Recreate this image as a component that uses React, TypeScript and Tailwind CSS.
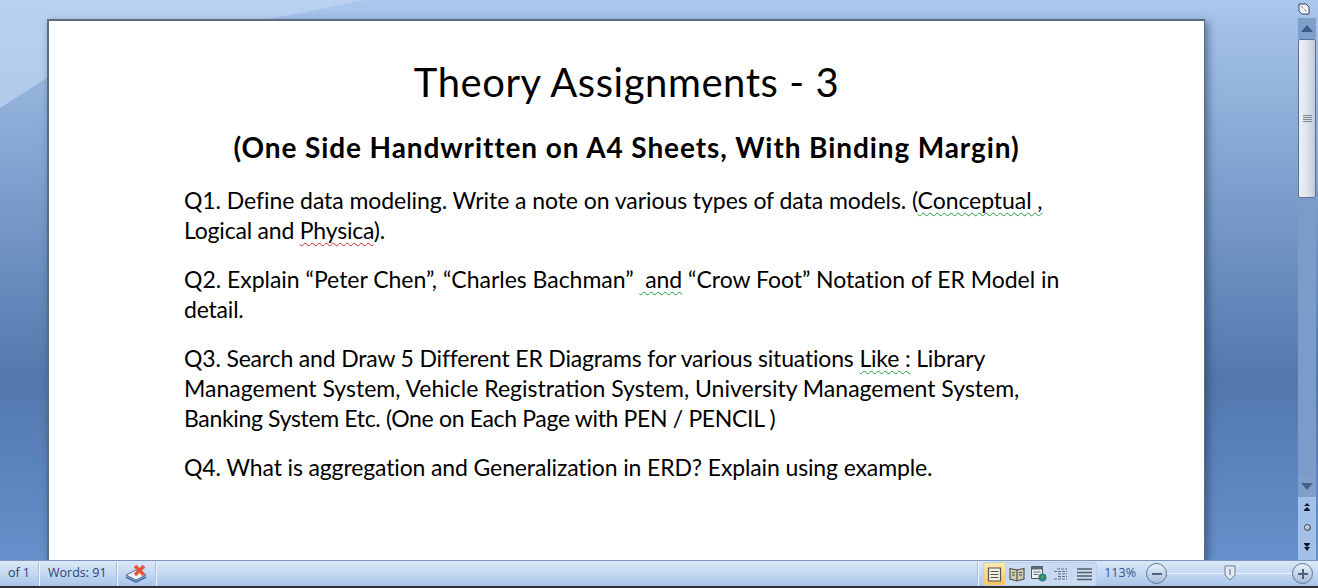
import React from "react";

const bodyFont = "font-['Lato','Carlito','Liberation_Sans',sans-serif]";

function Squiggle({ color, children }: { color: "red" | "green"; children: React.ReactNode }) {
  return (
    <span
      className={`underline decoration-wavy decoration-1 underline-offset-[3px] [text-decoration-skip-ink:none] ${
        color === "red" ? "decoration-[#cc2a2a]" : "decoration-[#259a45]"
      }`}
    >
      {children}
    </span>
  );
}

function Line({ children, className = "" }: { children: React.ReactNode; className?: string }) {
  return <div className={`h-[30px] whitespace-pre leading-[30px] ${className}`}>{children}</div>;
}

function Scrollbar() {
  return (
    <div className="flex h-full w-[18px] flex-col items-center bg-[#a3c0e8] pb-[3px]">
      <div className="flex h-[21px] w-[18px] items-center justify-center bg-[#7f9fcb]">
        <svg width="12" height="7" viewBox="0 0 12 7">
          <path d="M6 0 L12 7 L0 7 Z" fill="#3f5a86" />
        </svg>
      </div>
      <div className="flex h-[159px] w-[18px] items-center justify-center rounded-[2px] border border-[#5a7096] bg-gradient-to-r from-[#eef1f6] via-[#dfe4ec] to-[#c3cbd8]">
        <svg width="9" height="8" viewBox="0 0 9 8" stroke="#7f8794" strokeWidth="1">
          <path d="M0 .5H9M0 2.5H9M0 4.5H9M0 6.5H9" />
        </svg>
      </div>
      <div className="min-h-0 w-[18px] flex-1 bg-[#7d9bc8]" />
      <div className="flex h-[22px] w-[18px] items-center justify-center bg-[#7f9fcb]">
        <svg width="12" height="7" viewBox="0 0 12 7">
          <path d="M0 0 L12 0 L6 7 Z" fill="#4a628a" />
        </svg>
      </div>
      <div className="flex h-[20px] items-center justify-center">
        <svg width="8" height="8" viewBox="0 0 8 8" fill="#10182a">
          <path d="M4 0 L7 3 H1 Z M4 4 L7 7 H1 Z" />
          <path d="M1 7h6v1H1z" />
        </svg>
      </div>
      <div className="flex h-[20px] items-center justify-center">
        <div className="h-[7px] w-[7px] rounded-full border border-[#30405a] bg-gradient-to-br from-[#f2f4f8] to-[#8c96a8]" />
      </div>
      <div className="flex h-[20px] items-center justify-center">
        <svg width="8" height="8" viewBox="0 0 8 8" fill="#10182a">
          <path d="M1 0h6v1H1z" />
          <path d="M1 1 H7 L4 4 Z M1 4 H7 L4 8 Z" />
        </svg>
      </div>
    </div>
  );
}

function Divider() {
  return <div className="h-[24px] w-px shrink-0 bg-[#a9bfdb] shadow-[1px_0_0_#eef4fb]" />;
}

function ViewButton({ active, children }: { active?: boolean; children: React.ReactNode }) {
  return (
    <div
      className={`flex h-[23px] w-[22px] items-center justify-center border-r border-[#c3d5ec] ${
        active ? "bg-gradient-to-b from-[#fde9b0] to-[#f6c35c]" : ""
      }`}
    >
      {children}
    </div>
  );
}

function ZoomButton({ plus }: { plus?: boolean }) {
  return (
    <div className="flex h-[21px] w-[21px] shrink-0 items-center justify-center rounded-full border border-[#5c7396] bg-gradient-to-b from-[#e9f1fb] to-[#a6bcd9]">
      <svg width="12" height="12" viewBox="0 0 12 12" fill="#4c5f7c">
        <path d="M1 5h10v2H1z" />
        {plus && <path d="M5 1h2v10H5z" />}
      </svg>
    </div>
  );
}

function StatusBar() {
  return (
    <div className="relative z-10 flex h-[28px] shrink-0 flex-col">
      <div className="flex h-[26px] items-center border-t border-[#7b96bc] bg-gradient-to-b from-[#dbe8f8] via-[#c4d8f2] to-[#a8c5ea] font-['Open_Sans',sans-serif] text-[12.5px] text-[#2c4470]">
        <div className="flex w-[38px] shrink-0 justify-end pr-[8px] whitespace-nowrap">of 1</div>
        <Divider />
        <div className="w-[77px] shrink-0 pl-[9px] whitespace-nowrap">Words: 91</div>
        <Divider />
        <div className="flex w-[38px] shrink-0 justify-center">
          <svg width="24" height="20" viewBox="0 0 24 20">
            <path d="M2 11 L12 6 L22 11 L12 16 Z" fill="#eef2f8" stroke="#516a93" />
            <path d="M2 12 L12 17 L22 12 V14 L12 19 L2 14 Z" fill="#4a6ea8" />
            <path d="M11 2 L20 11 M20 2 L11 11" stroke="#e8553c" strokeWidth="3.5" />
          </svg>
        </div>
        <Divider />
        <div className="min-w-0 flex-1" />
        <Divider />
        <div className="ml-[5px] flex h-[24px] w-[114px] shrink-0 overflow-hidden rounded-[3px] border border-[#bcd0ea] bg-[#c9dbf3]">
          <ViewButton active>
            <svg width="15" height="15" viewBox="0 0 15 15" fill="#f4f1e6" stroke="#55534a" strokeWidth="1.2">
              <path d="M1.5 1h12v13h-12z" />
              <path d="M3.5 4.5h8M3.5 7.5h8M3.5 10.5h8" fill="none" />
            </svg>
          </ViewButton>
          <ViewButton>
            <svg width="16" height="15" viewBox="0 0 16 15" fill="#cfcab4" stroke="#55534a" strokeWidth="1.2">
              <path d="M1 1.5 L8 3 L15 1.5 V12 L8 14 L1 12 Z" />
              <path d="M8 3V14M3 5.5h3M3 8h3M10 5.5h3M10 8h3" />
            </svg>
          </ViewButton>
          <ViewButton>
            <svg width="16" height="16" viewBox="0 0 16 16">
              <path d="M.5.5h11v12H.5z" fill="#eef0f2" stroke="#4f5662" />
              <path d="M.5.5h11v3H.5z" fill="#5f6a7a" />
              <path d="M2.5 6h7M2.5 8.5h5" stroke="#5f6a7a" />
              <circle cx="11.5" cy="11.5" r="4" fill="#2e7f86" />
              <path d="M9.5 10.5l3-1.5 1 2-2 2.5z" fill="#4fa24f" />
            </svg>
          </ViewButton>
          <ViewButton>
            <svg width="15" height="13" viewBox="0 0 15 13" stroke="#626b78" strokeWidth="1.2">
              <path d="M4 1h10M1 3.5h13M5 6h9M5 8.5h9M1 11h13" strokeDasharray="3 1" />
            </svg>
          </ViewButton>
          <div className="flex h-[23px] min-w-0 flex-1 items-center justify-center">
            <svg width="15" height="13" viewBox="0 0 15 13" stroke="#555c66">
              <path d="M0 1h15M0 4.5h15M0 8h15M0 11.5h15" strokeWidth="1.6" />
            </svg>
          </div>
        </div>
        <div className="w-[39px] shrink-0 text-right text-[#2f5590]">113%</div>
        <div className="ml-[10px] flex w-[167px] shrink-0 items-center">
          <ZoomButton />
          <div className="relative h-px min-w-0 flex-1 bg-[#eaf1fa]">
            <svg className="absolute top-[-8px] left-[57px]" width="12" height="16" viewBox="0 0 12 16">
              <path d="M1 1h10v9l-5 5-5-5z" fill="#e3e9f1" stroke="#6a7d99" />
              <path d="M6 4v6" stroke="#9aa7ba" strokeWidth="2" />
            </svg>
          </div>
          <ZoomButton plus />
        </div>
        <div className="w-[5px] shrink-0" />
      </div>
      <div className="h-[2px] bg-[#2e2e2e]" />
    </div>
  );
}

export default function App() {
  return (
    <div className="flex h-[588px] w-[1318px] flex-col overflow-hidden bg-[#6b95cb]">
      <div className="relative flex min-h-0 flex-1 bg-gradient-to-b from-[#a9c6ec] via-[#5278ad] via-68% to-[#6690cc]">
        {/* lighter swoosh behind the page, top left */}
        <svg className="absolute top-0 left-0" width="420" height="112" viewBox="0 0 420 112">
          <path d="M0 0H365L270 19L47 78L0 108Z" fill="#c3d8f2" opacity="0.65" />
        </svg>
        <div className="relative flex min-w-0 flex-1 flex-col pt-[19px] pl-[47px] pr-[93px]">
          <div className={`h-[541px] shrink-0 border-t-2 border-l-2 border-r border-[#5b6b80] bg-white pt-[33px] pl-[135px] text-black shadow-[3px_3px_8px_rgba(30,50,80,0.55)] ${bodyFont}`}>
            <div className="-ml-[135px] h-[56px] text-center text-[40px] leading-[56px] tracking-[0.55px]">
              Theory Assignments - 3
            </div>
            <div className="-ml-[135px] mt-[18px] h-[38px] text-center text-[28px] leading-[38px] font-bold tracking-[0.9px]">
              (One Side Handwritten on A4 Sheets, With Binding Margin)
            </div>
            <div className="mt-[19px] text-[23px]">
              <Line className="tracking-[-0.07px]">
                Q1. Define data modeling. Write a note on various types of data models. (<Squiggle color="green">Conceptual ,</Squiggle>
              </Line>
              <Line className="tracking-[-0.2px]">
                Logical and <Squiggle color="red">Physica</Squiggle>).
              </Line>
              <Line className="mt-[19px] tracking-[-0.02px]">
                Q2. Explain “Peter Chen”, “Charles Bachman” <Squiggle color="green"> and</Squiggle> “Crow Foot” Notation of ER Model in
              </Line>
              <Line className="tracking-[-0.2px]">detail.</Line>
              <Line className="mt-[19px] tracking-[-0.17px]">
                Q3. Search and Draw 5 Different ER Diagrams for various situations <Squiggle color="green">Like :</Squiggle> Library
              </Line>
              <Line className="tracking-[0px]">Management System, Vehicle Registration System, University Management System,</Line>
              <Line className="tracking-[-0.34px]">Banking System Etc. (One on Each Page with PEN / PENCIL )</Line>
              <Line className="mt-[19px] tracking-[-0.13px]">Q4. What is aggregation and Generalization in ERD? Explain using example.</Line>
            </div>
          </div>
        </div>
        <div className="flex w-[20px] shrink-0 flex-col items-start">
          <div className="flex h-[18px] items-center">
            <svg width="12" height="12" viewBox="0 0 12 12">
              <path d="M1 1h7l3 3v7H4L1 8z" fill="#f2f5fa" stroke="#38455c" />
              <path d="M3 3l6 6" stroke="#38455c" strokeDasharray="1 1" />
            </svg>
          </div>
          <div className="min-h-0 flex-1">
            <Scrollbar />
          </div>
        </div>
      </div>
      <StatusBar />
    </div>
  );
}
